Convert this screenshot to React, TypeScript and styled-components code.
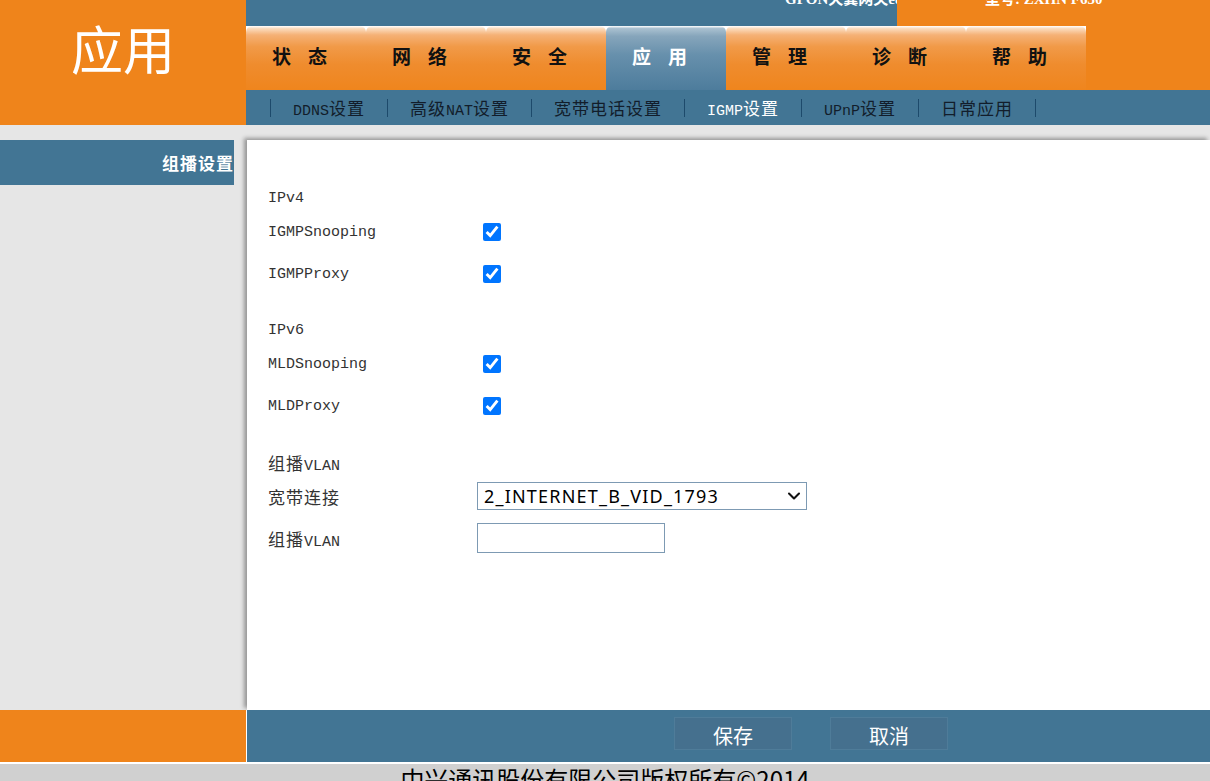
import React from 'react';
import styled, { createGlobalStyle } from 'styled-components';
import { ChevronDown } from 'lucide-react';

const orange = '#ef841b';
const blue = '#427594';
const grey = '#e6e6e6';

const GlobalStyle = createGlobalStyle`
  html, body {
    margin: 0;
    padding: 0;
    background: #fff;
  }
  body {
    font-family: "Liberation Mono", "Noto Sans CJK SC", monospace;
    overflow: hidden;
  }
  * {
    box-sizing: border-box;
  }
`;

// CJK runs get their own size so that they are 18px wide like the Latin 9px cells
const HAN = /([\u2E80-\u9FFF\uFF00-\uFFEF]+)/;

const Han = styled.span<{ $size: number }>`
  font-family: "Noto Sans CJK SC", sans-serif;
  font-size: ${p => p.$size}px;
  letter-spacing: 1px;
`;

const Mixed = ({ text, han = 17 }: { text: string; han?: number }) => (
  <>
    {text.split(HAN).map((part, i) =>
      HAN.test(part) ? <Han key={i} $size={han}>{part}</Han> : part
    )}
  </>
);

const Page = styled.div`
  width: 1210px;
  height: 781px;
  display: flex;
  flex-direction: column;
  overflow: hidden;
  & > * {
    flex-shrink: 0;
  }
`;

const Header = styled.header`
  display: flex;
  height: 125px;
`;

const Logo = styled.div`
  width: 246px;
  background: ${orange};
  color: #fff;
  font-family: "Noto Sans CJK SC", sans-serif;
  font-size: 52px;
  line-height: 52px;
  text-align: center;
  padding-top: 22px;
`;

const HeaderRight = styled.div`
  flex: 1;
  display: flex;
  flex-direction: column;
`;

const TopBand = styled.div`
  height: 26px;
  display: flex;
  background: ${blue};
  overflow: hidden;
  color: #fff;
  font-family: "Liberation Serif", "Noto Sans CJK SC", serif;
  font-weight: bold;
  font-size: 15px;
  line-height: 16px;
`;

const BandTitle = styled.div`
  margin-left: 539px;
  width: 112px;
  overflow: hidden;
  white-space: nowrap;
  margin-top: -9px;
`;

const ModelBox = styled.div`
  flex: 1;
  background: ${orange};
  padding-left: 88px;
  white-space: nowrap;
  & > span {
    display: block;
    margin-top: -9px;
  }
`;

const TabRow = styled.div`
  height: 64px;
  display: flex;
`;

const TabStrip = styled.nav`
  display: flex;
  background: #fff;
`;

const Tab = styled.div<{ $active?: boolean }>`
  width: 120px;
  display: flex;
  align-items: center;
  padding: 0 0 6px 26px;
  border-radius: 6px 6px 0 0;
  font-family: "Noto Sans CJK SC", sans-serif;
  font-weight: bold;
  font-size: 19px;
  letter-spacing: 17px;
  white-space: nowrap;
  color: ${p => (p.$active ? '#fff' : '#111')};
  background: ${p =>
    p.$active
      ? 'linear-gradient(to bottom, #ffffff 0%, #a9c0d0 4%, #86a5bb 16%, #6790ac 45%, #4d7c9c 100%)'
      : 'linear-gradient(to bottom, #ffffff 0%, #fbdcbe 4%, #f5b176 14%, #f19a48 32%, #ef8c2e 60%, #ef851d 100%)'};
`;

const TabFill = styled.div`
  flex: 1;
  background: ${orange};
`;

const SubNav = styled.div`
  height: 35px;
  display: flex;
  align-items: center;
  gap: 18px;
  padding-left: 20px;
  background: ${blue};
  font-size: 15px;
  white-space: nowrap;
`;

const SubItem = styled.span<{ $active?: boolean }>`
  color: ${p => (p.$active ? '#fff' : '#121d2b')};
`;

const Sep = styled.span`
  width: 9px;
  height: 18px;
  display: flex;
  justify-content: center;
  &::before {
    content: '';
    width: 1px;
    background: #1d4a6b;
  }
`;

const Body = styled.div`
  display: flex;
  height: 585px;
  background: ${grey};
`;

const Sidebar = styled.aside`
  width: 246px;
  padding-top: 15px;
`;

const SideItem = styled.div`
  width: 234px;
  height: 45px;
  line-height: 45px;
  background: ${blue};
  color: #fff;
  text-align: right;
  font-family: "Noto Sans CJK SC", sans-serif;
  font-weight: bold;
  font-size: 17px;
  letter-spacing: 1px;
`;

const MainArea = styled.main`
  flex: 1;
  display: flex;
  padding-top: 15px;
  padding-left: 1px;
`;

const Panel = styled.div`
  flex: 1;
  background: #fff;
  box-shadow: -3px -2px 4px rgba(0, 0, 0, 0.35);
  padding: 45px 0 0 21px;
  color: #333;
  font-size: 15px;
`;

const Section = styled.section`
  margin-bottom: 22px;
`;

const SectionTitle = styled.div`
  height: 26px;
  display: flex;
  align-items: center;
`;

const Row = styled.div`
  height: 42px;
  display: grid;
  grid-template-columns: 209px auto;
  align-items: center;
`;

const Check = styled.input.attrs({ type: 'checkbox' })`
  width: 18px;
  height: 18px;
  margin: 0 0 0 6px;
`;

const SelectWrap = styled.div`
  position: relative;
  width: 330px;
  height: 28px;
`;

const Select = styled.select`
  appearance: none;
  width: 100%;
  height: 100%;
  border: 1px solid #7d9ab3;
  border-radius: 0;
  background: #fff;
  color: #000;
  font-family: "Noto Sans", sans-serif;
  font-size: 18px;
  letter-spacing: 1.2px;
  padding: 0 0 0 6px;
`;

const Chevron = styled(ChevronDown)`
  position: absolute;
  right: 3px;
  top: 4px;
  color: #111;
  pointer-events: none;
`;

const TextInput = styled.input`
  width: 188px;
  height: 30px;
  border: 1px solid #7d9ab3;
  border-radius: 0;
  outline: none;
`;

const Footer = styled.footer`
  height: 52px;
  display: flex;
`;

const FootLeft = styled.div`
  width: 246px;
  background: ${orange};
`;

const FootRight = styled.div`
  flex: 1;
  display: flex;
  align-items: flex-start;
  gap: 38px;
  padding: 7px 0 0 427px;
  background: ${blue};
  margin-left: 1px;
`;

const Button = styled.button`
  width: 118px;
  height: 33px;
  background: #45708e;
  border: 1px solid #4f7c99;
  color: #fff;
  font-family: "Noto Sans CJK SC", sans-serif;
  font-size: 20px;
  line-height: 1;
  padding: 4px 0 0;
`;

const Copyright = styled.div`
  flex: 1;
  margin-top: 2px;
  background: #d0d0d0;
  text-align: center;
  font-family: "Noto Sans CJK SC", sans-serif;
  font-size: 24px;
  line-height: 30px;
  color: #000;
  white-space: nowrap;
`;

const tabs = ['状态', '网络', '安全', '应用', '管理', '诊断', '帮助'];
const subs = ['DDNS设置', '高级NAT设置', '宽带电话设置', 'IGMP设置', 'UPnP设置', '日常应用'];

const App = () => {
  return (
    <Page>
      <GlobalStyle />
      <Header>
        <Logo>应用</Logo>
        <HeaderRight>
          <TopBand>
            <BandTitle>GPON天翼网关e8-C终端</BandTitle>
            <ModelBox>
              <span>型号: ZXHN F650</span>
            </ModelBox>
          </TopBand>
          <TabRow>
            <TabStrip>
              {tabs.map(t => (
                <Tab key={t} $active={t === '应用'}>
                  {t}
                </Tab>
              ))}
            </TabStrip>
            <TabFill />
          </TabRow>
          <SubNav>
            <Sep />
            {subs.map(s => (
              <React.Fragment key={s}>
                <SubItem $active={s === 'IGMP设置'}>
                  <Mixed text={s} />
                </SubItem>
                <Sep />
              </React.Fragment>
            ))}
          </SubNav>
        </HeaderRight>
      </Header>

      <Body>
        <Sidebar>
          <SideItem>组播设置</SideItem>
        </Sidebar>
        <MainArea>
          <Panel>
            <Section>
              <SectionTitle>IPv4</SectionTitle>
              <Row>
                <span>IGMPSnooping</span>
                <Check defaultChecked />
              </Row>
              <Row>
                <span>IGMPProxy</span>
                <Check defaultChecked />
              </Row>
            </Section>
            <Section>
              <SectionTitle>IPv6</SectionTitle>
              <Row>
                <span>MLDSnooping</span>
                <Check defaultChecked />
              </Row>
              <Row>
                <span>MLDProxy</span>
                <Check defaultChecked />
              </Row>
            </Section>
            <Section>
              <SectionTitle>
                <span><Mixed text="组播VLAN" /></span>
              </SectionTitle>
              <Row>
                <span><Mixed text="宽带连接" /></span>
                <SelectWrap>
                  <Select defaultValue="2_INTERNET_B_VID_1793">
                    <option>2_INTERNET_B_VID_1793</option>
                  </Select>
                  <Chevron size={20} strokeWidth={2.5} />
                </SelectWrap>
              </Row>
              <Row>
                <span><Mixed text="组播VLAN" /></span>
                <TextInput type="text" />
              </Row>
            </Section>
          </Panel>
        </MainArea>
      </Body>

      <Footer>
        <FootLeft />
        <FootRight>
          <Button>保存</Button>
          <Button>取消</Button>
        </FootRight>
      </Footer>
      <Copyright>中兴通讯股份有限公司版权所有©2014</Copyright>
    </Page>
  );
};

export default App;
